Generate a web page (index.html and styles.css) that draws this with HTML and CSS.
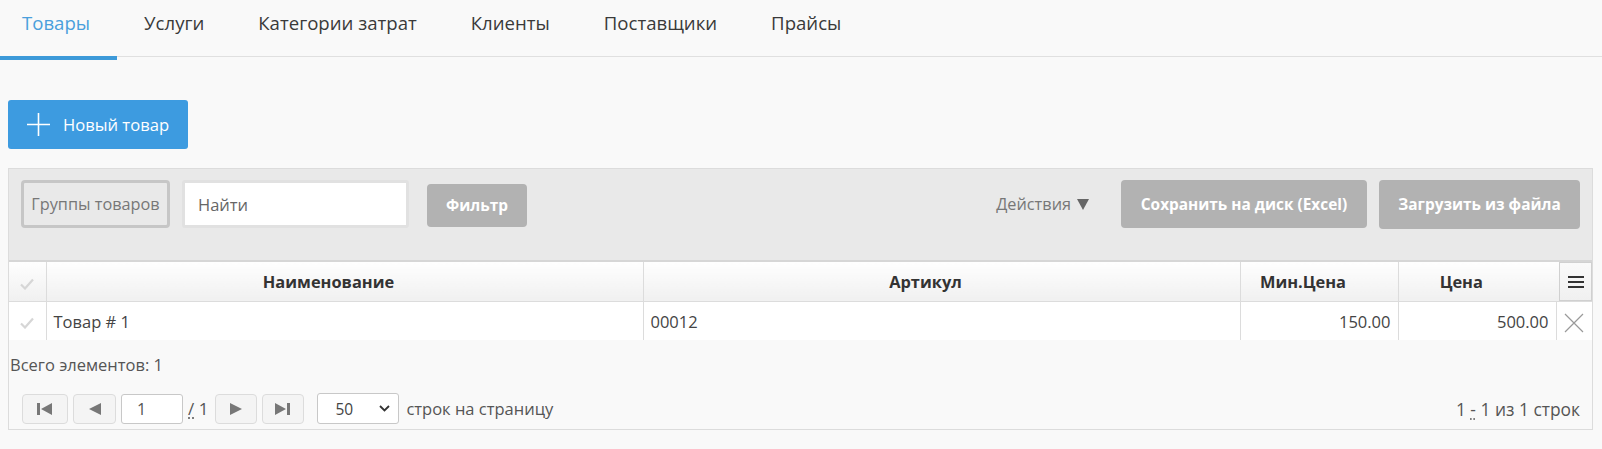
FILE: index.html
```html
<!DOCTYPE html>
<html lang="ru">

<head>
    <meta charset="UTF-8">
    <meta name="viewport" content="width=device-width, initial-scale=1.0">
    <title>Товары</title>
    <link rel="stylesheet" href="styles.css">
</head>

<body>
    <nav class="tabs">
        <a class="tab active">Товары</a>
        <a class="tab">Услуги</a>
        <a class="tab">Категории затрат</a>
        <a class="tab">Клиенты</a>
        <a class="tab">Поставщики</a>
        <a class="tab">Прайсы</a>
    </nav>

    <div class="page-actions">
        <button class="btn-primary">
            <svg class="plus" width="23" height="23" viewBox="0 0 23 23">
                <path d="M11.5 0v23M0 11.5h23" stroke="#fff" stroke-width="1.6" fill="none"/>
            </svg>
            Новый товар
        </button>
    </div>

    <div class="grid">
        <div class="toolbar">
            <button class="btn-groups">Группы товаров</button>
            <input class="search" type="text" placeholder="Найти">
            <button class="btn-gray btn-filter">Фильтр</button>
            <div class="spacer"></div>
            <div class="actions">
                Действия
                <svg width="12" height="11" viewBox="0 0 12 11"><path d="M0 0h12L6 11z" fill="#666"/></svg>
            </div>
            <button class="btn-gray btn-save">Сохранить на диск (Excel)</button>
            <button class="btn-gray btn-load">Загрузить из файла</button>
        </div>

        <table class="grid-table">
            <colgroup>
                <col style="width:37px">
                <col style="width:597px">
                <col style="width:597px">
                <col style="width:158px">
                <col style="width:158px">
                <col>
            </colgroup>
            <thead>
                <tr>
                    <th class="col-check">
                        <svg width="14" height="12" viewBox="0 0 14 12"><path d="M1 6.5l4 4L13 1.5" stroke="#d6d6d6" stroke-width="2.2" fill="none"/></svg>
                    </th>
                    <th>Наименование</th>
                    <th>Артикул</th>
                    <th>Мин.Цена</th>
                    <th>Цена</th>
                    <th class="col-menu">
                        <div class="menu-box">
                            <svg width="16" height="14" viewBox="0 0 16 14"><path d="M0 2h16M0 7h16M0 12h16" stroke="#333" stroke-width="2.2"/></svg>
                        </div>
                    </th>
                </tr>
            </thead>
            <tbody>
                <tr>
                    <td class="col-check">
                        <svg width="14" height="12" viewBox="0 0 14 12"><path d="M1 6.5l4 4L13 1.5" stroke="#d6d6d6" stroke-width="2.2" fill="none"/></svg>
                    </td>
                    <td>Товар # 1</td>
                    <td>00012</td>
                    <td class="num">150.00</td>
                    <td class="num">500.00</td>
                    <td class="col-del">
                        <svg width="20" height="20" viewBox="0 0 20 20"><path d="M1 1l18 18M19 1L1 19" stroke="#9a9a9a" stroke-width="1.2" fill="none"/></svg>
                    </td>
                </tr>
            </tbody>
        </table>

        <div class="grid-footer">
            <div class="total">Всего элементов: 1</div>
            <div class="pager">
                <button class="pg-btn pg-first">
                    <svg width="16" height="12" viewBox="0 0 16 12"><path d="M0 0h3v12H0zM15 0v12L4 6z" fill="#777"/></svg>
                </button>
                <button class="pg-btn pg-prev">
                    <svg width="12" height="12" viewBox="0 0 12 12"><path d="M12 0v12L0 6z" fill="#777"/></svg>
                </button>
                <input class="pg-input" type="text" value="1">
                <span class="pg-of"><abbr title="из">/</abbr> 1</span>
                <button class="pg-btn pg-next">
                    <svg width="12" height="12" viewBox="0 0 12 12"><path d="M0 0v12L12 6z" fill="#777"/></svg>
                </button>
                <button class="pg-btn pg-last">
                    <svg width="16" height="12" viewBox="0 0 16 12"><path d="M0 0v12L11 6zM12 0h3v12h-3z" fill="#777"/></svg>
                </button>
                <div class="pg-size">
                    <span>50</span>
                    <svg width="11" height="7" viewBox="0 0 11 7"><path d="M1 1l4.5 4.5L10 1" stroke="#333" stroke-width="1.8" fill="none"/></svg>
                </div>
                <span class="pg-label">строк на страницу</span>
                <div class="spacer"></div>
                <span class="pg-info">1 <abbr title="по">-</abbr> 1 из 1 строк</span>
            </div>
        </div>
    </div>
</body>

</html>
```

FILE: styles.css
```css
body {
    margin: 0;
    background: #f9f9f9;
    font-family: "Open Sans", "Noto Sans", sans-serif;
    font-size: 16.5px;
    color: #555;
}

button,
input {
    font-family: inherit;
}

/* вкладки */
.tabs {
    display: flex;
    height: 56px;
    border-bottom: 1px solid #e0e0e0;
}

.tab {
    position: relative;
    padding: 0 27px;
    line-height: 45px;
    font-size: 18.6px;
    color: #3a3a3a;
    cursor: pointer;
}

.tab:first-child {
    padding-left: 22px;
}

.tab.active {
    color: #4a9fdc;
}

.tab.active::after {
    content: "";
    position: absolute;
    left: 0;
    right: 0;
    bottom: -4px;
    height: 4px;
    background: #3d9ad9;
}

/* кнопка "новый товар" */
.page-actions {
    padding: 43px 0 0 8px;
}

.btn-primary {
    display: flex;
    align-items: center;
    width: 180px;
    height: 49px;
    padding: 0 0 0 19px;
    border: none;
    border-radius: 3px;
    background: #3d9be0;
    color: #fff;
    font-size: 16.6px;
    cursor: pointer;
}

.btn-primary .plus {
    margin-right: 13px;
}

/* грид */
.grid {
    margin: 19px 9px 0 8px;
    border: 1px solid #dcdcdc;
}

.toolbar {
    display: flex;
    align-items: flex-start;
    padding: 11px 12px 31px 12px;
    background: #e9e9e9;
}

.spacer {
    flex: 1;
}

.btn-groups {
    width: 149px;
    height: 48px;
    padding: 0;
    border: 3px solid #c6c6c6;
    border-radius: 4px;
    background: #e9e9e9;
    color: #777;
    font-size: 16.3px;
}

.search {
    box-sizing: border-box;
    width: 227px;
    height: 48px;
    margin-left: 12px;
    padding: 0 13px;
    border: 3px solid #e1e1e1;
    border-radius: 3px;
    background: #fff;
    font-size: 16.5px;
    color: #555;
    outline: none;
}

.search::placeholder {
    color: #666;
}

.btn-gray {
    height: 48px;
    padding: 0;
    border: none;
    border-radius: 4px;
    background: #b2b2b2;
    color: #fff;
    font-weight: 700;
    font-size: 15.4px;
}

.btn-filter {
    width: 100px;
    height: 43px;
    margin: 4px 0 0 18px;
}

.actions {
    display: flex;
    align-items: center;
    gap: 6px;
    height: 48px;
    margin-right: 32px;
    color: #777;
    font-size: 16.3px;
}

.btn-save {
    width: 246px;
}

.btn-load {
    width: 201px;
    height: 49px;
    margin-left: 12px;
}

/* таблица */
.grid-table {
    width: 100%;
    table-layout: fixed;
    border-collapse: collapse;
    border-top: 2px solid #d6d6d6;
    background: #fff;
}

.grid-table th {
    height: 39px;
    padding: 0 32px 0 0;
    border-left: 1px solid #dcdcdc;
    border-bottom: 1px solid #dcdcdc;
    background: linear-gradient(#fefefe, #f0f0f0);
    color: #333;
    font-size: 16.4px;
    font-weight: 700;
    text-align: center;
}

.grid-table td {
    height: 38px;
    padding: 0 7px;
    border-left: 1px solid #dcdcdc;
    color: #444;
    white-space: nowrap;
}

.grid-table .col-check {
    padding: 0;
    border-left: none;
    text-align: center;
}

.grid-table .num {
    text-align: right;
}

.grid-table .col-menu {
    padding: 0 0 0 3px;
    border-left: none;
}

.menu-box {
    display: flex;
    align-items: center;
    justify-content: center;
    height: 37px;
    border: 1px solid #d0d0d0;
    background: linear-gradient(#fafafa, #f0f0f0);
}

.grid-table .col-del {
    padding: 0;
    text-align: center;
}

.grid-table svg {
    display: inline-block;
    vertical-align: middle;
}

/* низ грида */
.grid-footer {
    padding: 14px 12px 5px 1px;
}

.total {
    line-height: 22px;
    color: #555;
}

.pager {
    display: flex;
    align-items: center;
    margin-top: 17px;
    padding-left: 12px;
    height: 31px;
}

.pg-btn {
    display: flex;
    align-items: center;
    justify-content: center;
    height: 30px;
    padding: 0;
    border: 1px solid #dcdcdc;
    border-radius: 4px;
    background: #f4f4f4;
}

.pg-first {
    width: 46px;
}

.pg-prev {
    width: 43px;
    margin-left: 5px;
}

.pg-input {
    box-sizing: border-box;
    width: 62px;
    height: 30px;
    margin-left: 5px;
    padding: 0 15px;
    border: 1px solid #c8c8c8;
    border-radius: 3px;
    font-size: 16px;
    color: #555;
}

.pg-of {
    margin: 0 7px 0 5px;
    color: #555;
    font-size: 17px;
}

.pg-of abbr,
.pg-info abbr {
    text-decoration: underline dotted;
    text-underline-offset: 3px;
}

.pg-next {
    width: 42px;
}

.pg-last {
    width: 42px;
    margin-left: 5px;
}

.pg-size {
    box-sizing: border-box;
    display: flex;
    align-items: center;
    justify-content: space-between;
    width: 82px;
    height: 31px;
    margin-left: 13px;
    padding: 0 8px 0 17px;
    border: 1px solid #c8c8c8;
    border-radius: 3px;
    background: #fff;
    color: #444;
    font-size: 15.5px;
}

.pg-label {
    margin-left: 7px;
    color: #555;
}

.pg-info {
    color: #555;
    font-size: 17.4px;
}
```
